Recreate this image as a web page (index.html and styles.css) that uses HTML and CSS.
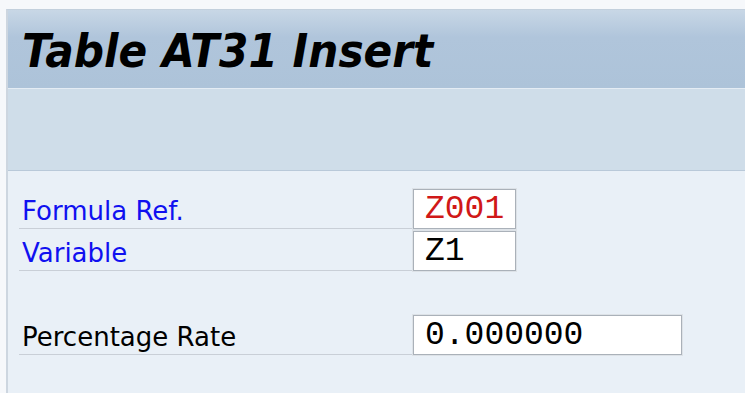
FILE: index.html
```html
<!DOCTYPE html>
<html lang="en">

<head>
    <meta charset="UTF-8">
    <meta name="viewport" content="width=device-width, initial-scale=1.0">
    <title>Table AT31 Insert</title>
    <link rel="stylesheet" href="styles.css">
</head>

<body>
    <div id="frame">
        <div id="header">
            <h1 class="title">Table AT31 Insert</h1>
        </div>
        <div id="toolbar"></div>
        <div id="content">
            <div class="row">
                <label class="label key" for="formulaRef">Formula Ref.</label>
                <input class="field short key-value" id="formulaRef" value="Z001" readonly>
            </div>
            <div class="row">
                <label class="label key" for="variable">Variable</label>
                <input class="field short" id="variable" value="Z1" readonly>
            </div>
            <div class="row empty"></div>
            <div class="row">
                <label class="label" for="rate">Percentage Rate</label>
                <input class="field long" id="rate" value="0.000000">
            </div>
        </div>
    </div>
</body>

</html>
```

FILE: styles.css
```css
html, body {
    margin: 0;
    height: 100%;
    overflow: hidden;
    background-color: #f6f8fb;
    font-family: "DejaVu Sans", sans-serif;
}

#frame {
    margin: 9px 0 0 6px;
    height: 100%;
    border-left: 2px solid #cdd6e0;
    border-top: 1px solid #c3d0dd;
    display: flex;
    flex-direction: column;
}

#header {
    height: 79px;
    background: linear-gradient(#c8d7e6, #b0c5db 35%, #adc3d9);
    border-bottom: 1px solid #e4ecf4;
    box-sizing: border-box;
}

.title {
    margin: 0;
    padding: 16px 0 0 14px;
    font-family: "DejaVu Sans Condensed", "DejaVu Sans", sans-serif;
    font-size: 47px;
    font-weight: bold;
    font-style: italic;
    line-height: 50px;
    color: #000;
}

#toolbar {
    height: 81px;
    background-color: #cfdde9;
    border-bottom: 1px solid #b9c9d9;
}

#content {
    flex: 1;
    background-color: #e9f0f7;
    padding: 18px 0 0 11px;
}

.row {
    display: flex;
    height: 40px;
    margin-bottom: 2px;
}

.label {
    width: 394px;
    box-sizing: border-box;
    padding: 0 0 2px 3px;
    border-bottom: 1px solid #c9cfd7;
    display: flex;
    align-items: flex-end;
    font-size: 26px;
    line-height: 30px;
    color: #000;
}

.key {
    color: #1010f0;
}

.field {
    box-sizing: border-box;
    height: 40px;
    margin: 0;
    padding: 1px 0 0 11px;
    border: 1px solid #aab1b9;
    box-shadow: 0 0 0 1px #dde2e7;
    background-color: #fff;
    font-family: "Liberation Mono", monospace;
    font-size: 33px;
    color: #000;
    outline: none;
}

.short {
    width: 103px;
}

.long {
    width: 269px;
}

.key-value {
    color: #d01818;
}
```
